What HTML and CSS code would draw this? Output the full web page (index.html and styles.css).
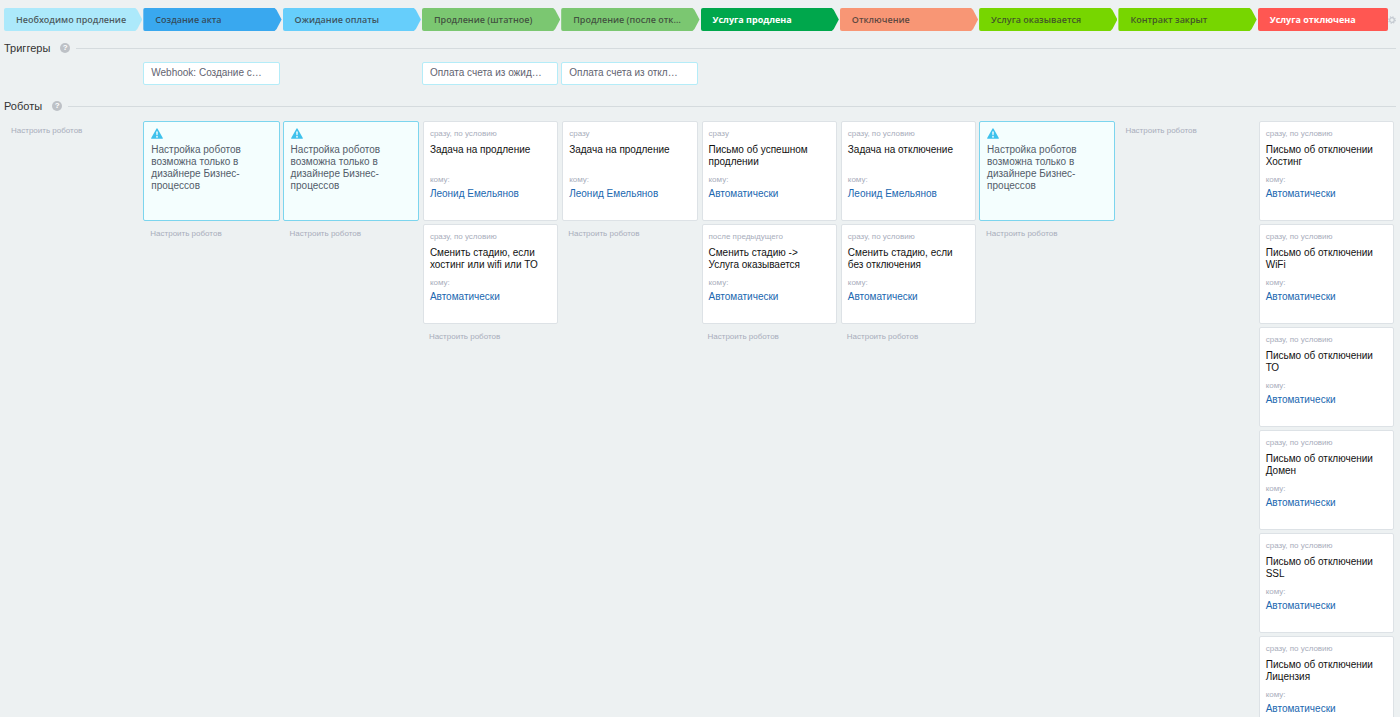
FILE: index.html
```html
<!DOCTYPE html>
<html lang="ru">
<head>
<meta charset="utf-8">
<title>Роботы и триггеры</title>
<link rel="stylesheet" href="styles.css">
</head>
<body>
<svg class="defs" aria-hidden="true">
  <symbol id="warn" viewBox="0 0 12 11">
    <path d="M5.400.7Q6 0 6.600.7L11.800 9.900Q12 10.800 11.300 10.800H.7Q0 10.800 .2 9.900Z" fill="#3ec1ec"/>
    <path d="M5.200 3.500H6.800L6.500 7.200H5.500Z" fill="#fff"/>
    <circle cx="6" cy="8.800" r=".9" fill="#fff"/>
  </symbol>
</svg>
<main class="automation">
  <nav class="stages" id="stages"></nav>

  <section>
    <header class="heading">
      <h2>Триггеры</h2>
      <button class="help" aria-label="Справка о триггерах">?</button>
    </header>
    <div class="triggers" id="triggers"></div>
  </section>

  <section>
    <header class="heading">
      <h2>Роботы</h2>
      <button class="help" aria-label="Справка о роботах">?</button>
    </header>
    <div class="robots" id="robots"></div>
  </section>
</main>
<script src="app.js"></script>
</body>
</html>
```

FILE: styles.css
```css
* {
  box-sizing: border-box;
}

body {
  margin: 0;
  background: #edf1f2;
  color: #333;
  font-family: "Liberation Sans", Arial, sans-serif;
  font-size: 10px;
}

button {
  margin: 0;
  padding: 0;
  border: 0;
  background: none;
  font: inherit;
  cursor: pointer;
}

h2,
h3,
p {
  margin: 0;
  font-weight: 400;
}

a {
  text-decoration: none;
}

.defs {
  display: none;
}

/* The board fills the window and clips the columns that run below it */
.automation {
  height: 100vh;
  padding: 8px 4px 0;
  overflow: hidden;
}

/* Stage arrows */
.stages {
  display: grid;
  grid-template-columns: repeat(10, minmax(0, 1fr));
  gap: 1px;
}

.stage-cell {
  display: flex;
  align-items: center;
}

.stage {
  flex: 1;
  min-width: 0;
  height: 23px;
  padding: 0 15px 0 12px;
  border-radius: 2px;
  clip-path: polygon(0 0, calc(100% - 7px) 0, calc(100% - 5px) 2px, 100% 50%, calc(100% - 5px) 21px, calc(100% - 7px) 100%, 0 100%);
  color: rgba(51, 51, 51, 0.8);
  font: 600 9px/22px "Open Sans", sans-serif;
  text-align: left;
  white-space: nowrap;
  overflow: hidden;
  text-overflow: ellipsis;
}

.stage-final {
  clip-path: none;
}

.stage-light {
  color: #fff;
  font-weight: 700;
}

.aqua { background: #ace9fb; }
.blue { background: #39a8ef; }
.sky { background: #66cefb; }
.green { background: #7bc771; }
.emerald { background: #00a74c; }
.salmon { background: #f89675; }
.lime { background: #77d600; }
.red { background: #ff5752; }

.gear {
  display: flex;
  width: 8px;
}

.gear svg {
  width: 8px;
  height: 8px;
}

/* Section headings */
.heading {
  display: flex;
  align-items: center;
  height: 28px;
  margin-top: 3px;
}

.heading h2 {
  font-size: 11px;
  line-height: 16px;
}

.heading::after {
  content: "";
  flex: 1;
  height: 1px;
  margin-left: 6px;
  background: #d5dbde;
}

.help {
  width: 10px;
  height: 10px;
  margin-left: 10px;
  border-radius: 50%;
  background: #bdc1c6;
  color: #fff;
  font-size: 8px;
  font-weight: 700;
  line-height: 10px;
}

/* Columns */
.triggers,
.robots {
  display: grid;
  grid-template-columns: repeat(10, minmax(0, 1fr));
  column-gap: 3px;
  padding-right: 2px;
}

.triggers {
  margin-bottom: 7px;
}

.robots {
  padding-top: 1px;
}

.trigger {
  width: 100%;
  height: 23px;
  padding: 0 12px 2px 7px;
  border: 1px solid #b4ecf8;
  border-radius: 2px;
  background: #fff;
  color: #626370;
  text-align: left;
  white-space: nowrap;
  overflow: hidden;
  text-overflow: ellipsis;
}

.column {
  display: flex;
  flex-direction: column;
  gap: 3px;
  min-width: 0;
}

.robot,
.notice {
  min-height: 100px;
  border-radius: 2px;
  line-height: 12px;
}

.robot {
  margin-left: 1px;
  padding: 6px;
  border: 1px solid #dde2e6;
  background: #fff;
}

.when,
.to,
.setup {
  color: #a8adbb;
  font-size: 8px;
}

.robot h3 {
  min-height: 24px;
  margin: 4px 0 6px;
  color: #111;
  font-size: 10px;
}

.robot a {
  display: block;
  margin-top: 2px;
  color: #2067b0;
}

.notice {
  padding: 6px 12px 0 7px;
  border: 1px solid #7cd5ee;
  background: #f4fefe;
  color: #535c69;
}

.notice svg {
  display: block;
  width: 12px;
  height: 11px;
  margin-bottom: 5px;
}

.setup {
  align-self: flex-start;
  padding: 0 7px;
  line-height: 20px;
}
```

FILE: app.js
```js
const stages = [
  ['Необходимо продление', 'aqua'],
  ['Создание акта', 'blue'],
  ['Ожидание оплаты', 'sky'],
  ['Продление (штатное)', 'green'],
  ['Продление (после отключения)', 'green'],
  ['Услуга продлена', 'emerald stage-light'],
  ['Отключение', 'salmon'],
  ['Услуга оказывается', 'lime'],
  ['Контракт закрыт', 'lime'],
  ['Услуга отключена', 'red stage-light stage-final']
];

const triggers = {
  1: 'Webhook: Создание счета',
  3: 'Оплата счета из ожидания',
  4: 'Оплата счета из отключения'
};

const cond = 'сразу, по условию';
const auto = 'Автоматически';
const user = 'Леонид Емельянов';
const notice = 'notice';

const columns = [
  [],
  [notice],
  [notice],
  [[cond, 'Задача на продление', user], [cond, 'Сменить стадию, если хостинг или wifi или ТО', auto]],
  [['сразу', 'Задача на продление', user]],
  [['сразу', 'Письмо об успешном продлении', auto], ['после предыдущего', 'Сменить стадию -&gt; Услуга оказывается', auto]],
  [[cond, 'Задача на отключение', user], [cond, 'Сменить стадию, если без отключения', auto]],
  [notice],
  [],
  ['Хостинг', 'WiFi', 'ТО', 'Домен', 'SSL', 'Лицензия'].map(s => [cond, 'Письмо об отключении ' + s, auto])
];

const gear = `<button class="gear" aria-label="Настройки"><svg viewBox="0 0 8 8" fill="none" stroke="#c3c9d0"><circle cx="4" cy="4" r="2.300" stroke-width="1.200"/><circle cx="4" cy="4" r="3.300" stroke-width="1.100" stroke-dasharray="1.300 1.292"/></svg></button>`;

const card = r => r === notice
  ? `<article class="notice"><svg aria-hidden="true"><use href="#warn"/></svg><p>Настройка роботов возможна только в дизайнере Бизнес-процессов</p></article>`
  : `<article class="robot"><p class="when">${r[0]}</p><h3>${r[1]}</h3><p class="to">кому:</p><a href="#">${r[2]}</a></article>`;

document.getElementById('stages').innerHTML = stages.map(([name, cls], i) =>
  `<div class="stage-cell"><button class="stage ${cls}">${name}</button>${i === stages.length - 1 ? gear : ''}</div>`).join('');

document.getElementById('triggers').innerHTML = stages.map((_, i) =>
  `<div class="column">${triggers[i] ? `<button class="trigger">${triggers[i]}</button>` : ''}</div>`).join('');

document.getElementById('robots').innerHTML = columns.map(list =>
  `<div class="column">${list.map(card).join('')}<button class="setup">Настроить роботов</button></div>`).join('');
```
